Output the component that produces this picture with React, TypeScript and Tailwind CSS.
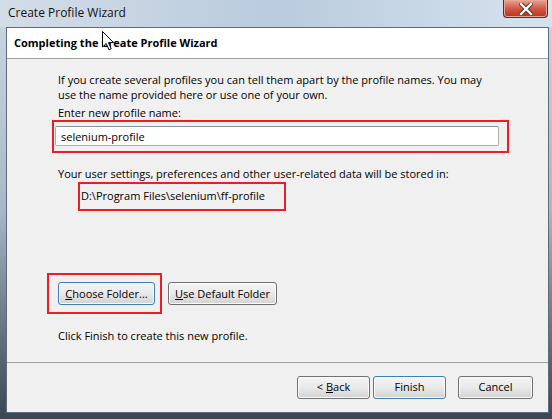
import React from 'react';

const btn =
  'h-[23px] rounded-[3px] border bg-gradient-to-b from-[#f4f4f4] via-[#e9e9e9] to-[#d2d2d2] text-[11px] text-black shadow-[inset_0_0_0_1px_#fbfbfb]';

const CloseButton = () => (
  <div className="w-[45px] h-[18px] rounded-b-[4px] border border-t-0 border-[#5c2a24] bg-gradient-to-b from-[#e7a495] via-[#cf5a45] to-[#b9301f] flex items-center justify-center shadow-[inset_0_0_0_1px_#e9a597]">
    <svg width="14" height="12" viewBox="0 0 14 12">
      <path d="M2 1 L12 11 M12 1 L2 11" stroke="#5a2a22" strokeWidth="4.2" strokeLinecap="square" />
      <path d="M2 1 L12 11 M12 1 L2 11" stroke="#ffffff" strokeWidth="2.4" strokeLinecap="square" />
    </svg>
  </div>
);

const Cursor = () => (
  <svg width="13" height="20" viewBox="0 0 13 20" className="absolute left-[102px] top-[31px]">
    <path d="M0.5 0.5 L0.5 16 L4.2 12.5 L7 18.8 L9.2 17.8 L6.5 11.6 L11.5 11.6 Z" fill="#ffffff" stroke="#000000" strokeWidth="1" strokeLinejoin="miter" />
  </svg>
);

export default function App() {
  return (
    <div
      className="relative w-[552px] h-[419px] overflow-hidden flex flex-col bg-gradient-to-b from-[#ccd8e4] via-[#a7b8ca] to-[#3b4654] text-black"
      style={{ fontFamily: '"Open Sans", "Noto Sans", sans-serif' }}
    >
      {/* title bar */}
      <div className="h-[27px] flex items-start justify-between pl-[8px] pr-[4px] bg-gradient-to-r from-[#d3dde8] via-[#b9cbdd] to-[#d6e3ef]">
        <span className="mt-[5px] text-[12px] leading-[16px] text-[#111]">Create Profile Wizard</span>
        <CloseButton />
      </div>

      {/* client */}
      <div className="flex-1 ml-[6px] mr-[3px] mb-[6px] border border-[#5d6b7a] bg-[#f0f0f0] flex flex-col">
        <div className="h-[31px] shrink-0 bg-white border-b border-[#a0a0a0] px-[7px] flex items-center">
          <span className="text-[11px] font-bold">Completing the Create Profile Wizard</span>
        </div>

        <div className="flex-1 pl-[51px] pt-[13px] text-[11px] leading-[15px]">
          <p className="w-[440px]">
            If you create several profiles you can tell them apart by the profile names. You may use the name provided here or use one of your own.
          </p>
          <p className="mt-[3px]">Enter new profile name:</p>
          <div className="mt-[6px] -ml-[3px] w-[444px] h-[20px] rounded-[2px] border border-[#abadb3] border-t-[#8e9199] bg-white flex items-center pl-[5px]">
            selenium-profile
          </div>
          <p className="mt-[20px]">Your user settings, preferences and other user-related data will be stored in:</p>
          <p className="mt-[7px] pl-[23px]">D:\Program Files\selenium\ff-profile</p>
          <div className="mt-[79px] flex gap-[13px]">
            <button className={`${btn} w-[97px] h-[22px] border-[#3c7fb1] shadow-[inset_0_0_0_1px_#bfe4f7]`}>
              <u>C</u>hoose Folder...
            </button>
            <button className={`${btn} w-[109px] h-[22px] border-[#707070]`}>
              <u>U</u>se Default Folder
            </button>
          </div>
          <p className="mt-[23px]">Click Finish to create this new profile.</p>
        </div>

        <div className="h-[50px] shrink-0 border-t border-[#a0a0a0] flex items-center justify-end pr-[15px] text-[11px]">
          <button className={`${btn} w-[73px] border-[#707070]`}>
            &lt; <u>B</u>ack
          </button>
          <button className={`${btn} w-[73px] ml-[3px] border-[#3c7fb1] shadow-[inset_0_0_0_1px_#bfe4f7]`}>Finish</button>
          <button className={`${btn} w-[75px] ml-[12px] border-[#707070]`}>Cancel</button>
        </div>
      </div>

      {/* red annotation boxes */}
      <div className="absolute left-[52px] top-[120px] w-[457px] h-[33px] border-2 border-[#ee1c24]" />
      <div className="absolute left-[78px] top-[182px] w-[208px] h-[29px] border-2 border-[#ee1c24]" />
      <div className="absolute left-[47px] top-[273px] w-[115px] h-[41px] border-2 border-[#ee1c24]" />

      <Cursor />
    </div>
  );
}
